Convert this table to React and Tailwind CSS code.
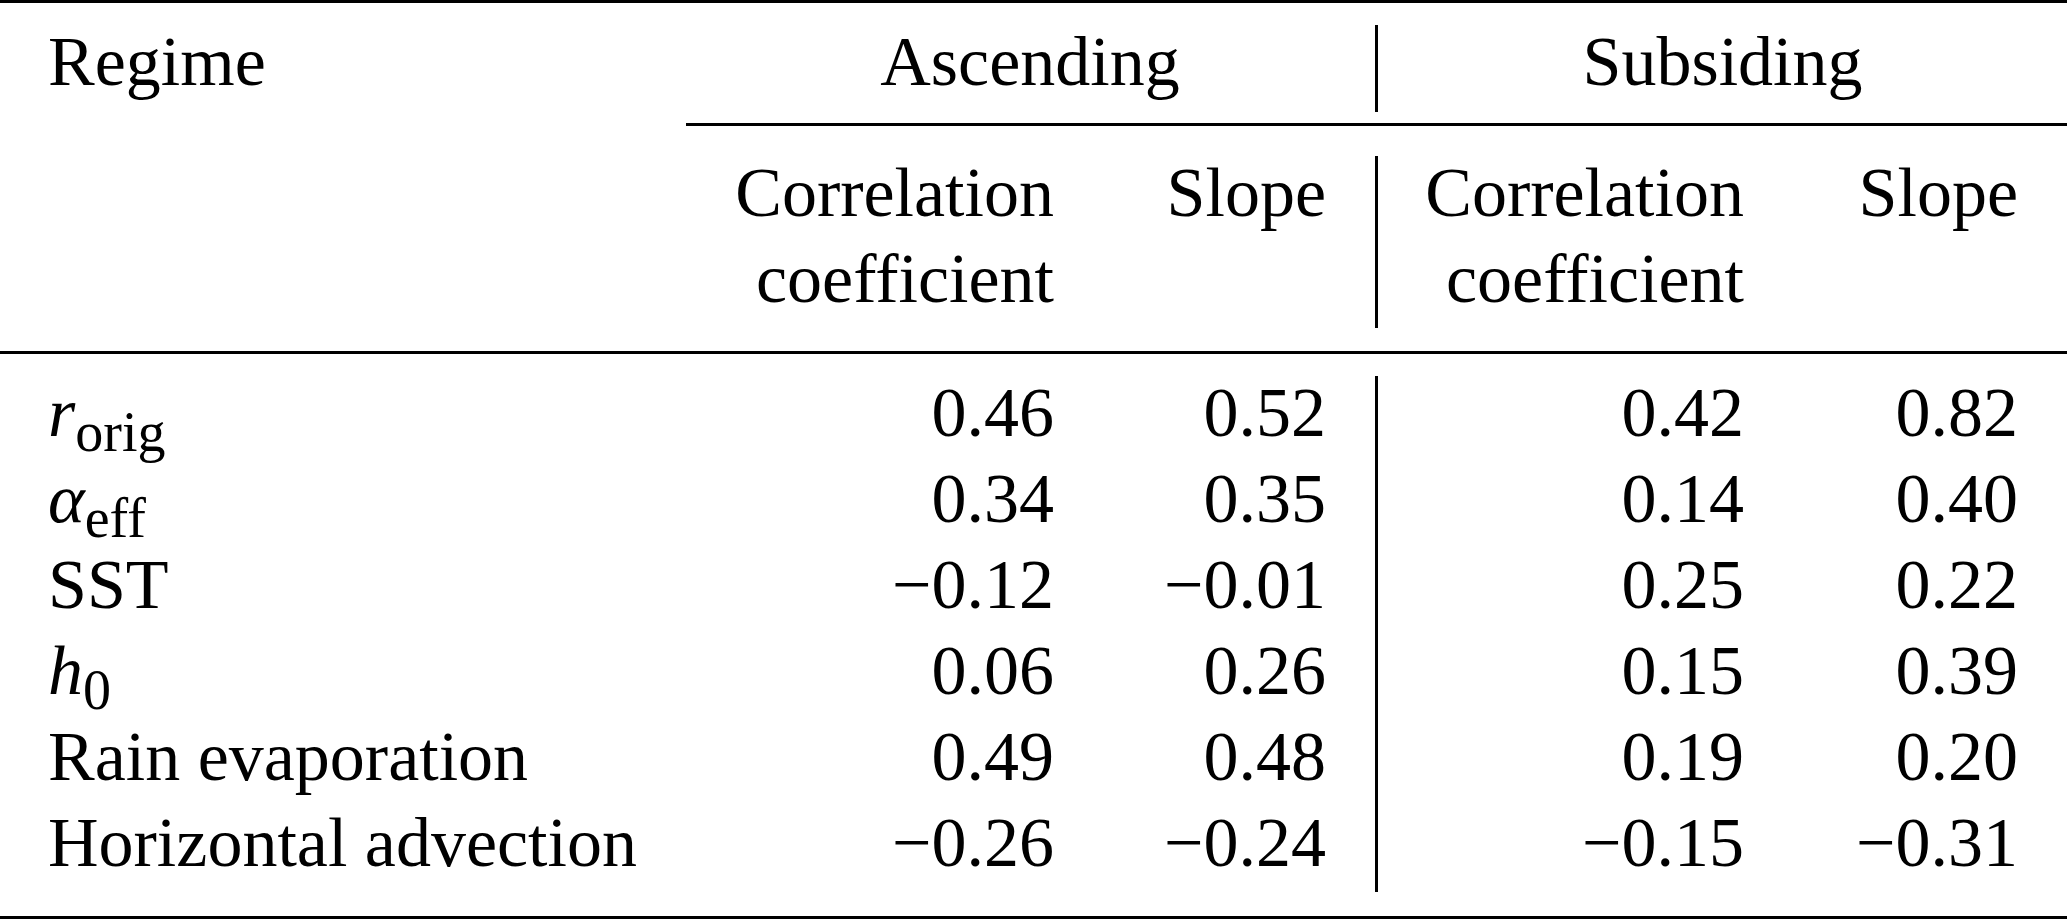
const rows = [
  { label: "r", sub: "orig", italic: true, vals: ["0.46", "0.52", "0.42", "0.82"] },
  { label: "α", sub: "eff", italic: true, vals: ["0.34", "0.35", "0.14", "0.40"] },
  { label: "SST", vals: ["−0.12", "−0.01", "0.25", "0.22"] },
  { label: "h", sub: "0", italic: true, vals: ["0.06", "0.26", "0.15", "0.39"] },
  { label: "Rain evaporation", vals: ["0.49", "0.48", "0.19", "0.20"] },
  { label: "Horizontal advection", vals: ["−0.26", "−0.24", "−0.15", "−0.31"] },
];

function Label({ r }) {
  return (
    <>
      <span className={r.italic ? "italic" : ""}>{r.label}</span>
      {r.sub && (
        <span className="text-[56px] leading-[0] align-[-15px]">{r.sub}</span>
      )}
    </>
  );
}

function Rule({ className = "" }) {
  return <div className={`h-[3px] bg-black ${className}`} />;
}

export default function App() {
  return (
    <div className="w-[2067px] h-[920px] bg-white text-black font-['Liberation_Serif',serif] text-[70px]">
      <Rule />

      {/* group header */}
      <div className="flex pt-[22px] pb-[11px]">
        <div className="w-[685px] pl-[48px] h-[87px] leading-[73px]">Regime</div>
        <div className="w-[690px] text-center leading-[73px]">Ascending</div>
        <div className="flex-1 border-l-[3px] border-black text-center leading-[73px]">
          Subsiding
        </div>
      </div>

      <Rule className="ml-[686px]" />

      {/* column headers */}
      <div className="flex pt-[30px] pb-[23px] leading-[73px]">
        <div className="w-[685px] h-[172px]" />
        <div className="w-[369px] text-right">
          <div className="h-[86px]">Correlation</div>
          <div className="h-[86px]">coefficient</div>
        </div>
        <div className="w-[321px] pr-[49px] text-right">
          <div className="h-[86px]">Slope</div>
        </div>
        <div className="w-[419px] pr-[50px] border-l-[3px] border-black text-right">
          <div className="h-[86px]">Correlation</div>
          <div className="h-[86px]">coefficient</div>
        </div>
        <div className="w-[273px] pr-[49px] text-right">
          <div className="h-[86px]">Slope</div>
        </div>
      </div>

      <Rule />

      {/* body */}
      <div className="pt-[22px] pb-[24px] leading-[73px]">
        {rows.map((r, i) => (
          <div key={i} className="flex h-[86px]">
            <div className="w-[685px] pl-[48px]">
              <Label r={r} />
            </div>
            <div className="w-[369px] text-right">{r.vals[0]}</div>
            <div className="w-[321px] pr-[49px] text-right">{r.vals[1]}</div>
            <div className="w-[419px] pr-[50px] border-l-[3px] border-black text-right">
              {r.vals[2]}
            </div>
            <div className="w-[273px] pr-[49px] text-right">{r.vals[3]}</div>
          </div>
        ))}
      </div>

      <Rule />
    </div>
  );
}
